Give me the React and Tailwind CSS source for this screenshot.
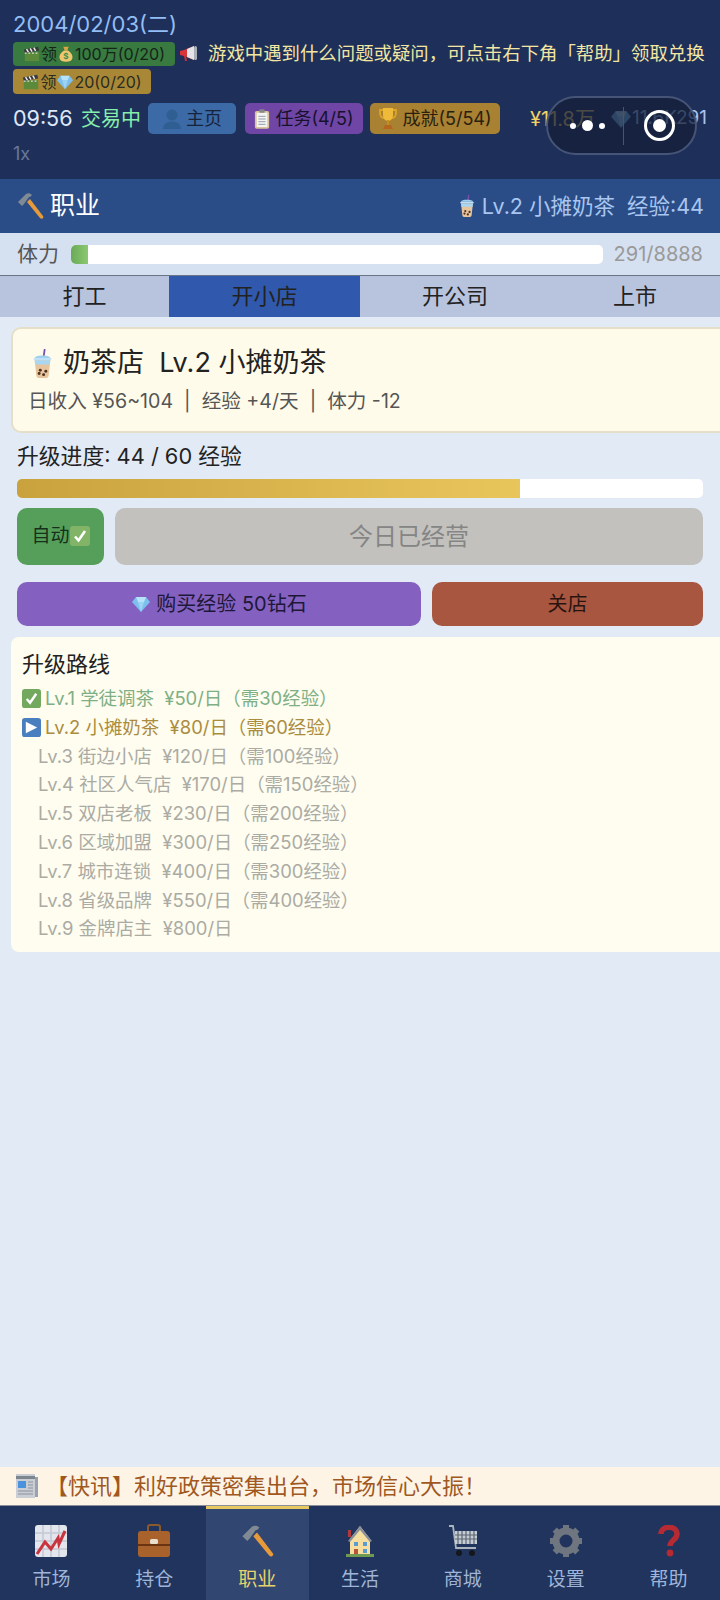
const FONT = { fontFamily: 'Inter, "Noto Sans CJK SC", "Noto Sans", sans-serif' }

function Clapper({ s = 18 }) {
  return (
    <svg width={s} height={s} viewBox="0 0 20 20" className="shrink-0">
      <rect x="2" y="8" width="16" height="10" fill="#5a8a3a" />
      <path d="M1 5l16-3 1 4-16 3z" fill="#3a3a3a" />
      <path d="M4 4.5l2 3.5M8 3.8l2 3.5M12 3l2 3.5" stroke="#eee" strokeWidth="1.6" />
      <path d="M2 9h16" stroke="#ddd" strokeWidth="1.2" strokeDasharray="2 2" />
    </svg>
  )
}
function MoneyBag({ s = 18 }) {
  return (
    <svg width={s} height={s} viewBox="0 0 20 20" className="shrink-0">
      <path d="M7 2h6l-1.5 4h-3z" fill="#d9a441" />
      <path d="M8 6h4c4 2 6 6 5 9-.6 2.400-3 3.500-7 3.500S3.600 17.400 3 15c-1-3 1-7 5-9z" fill="#f2c46d" />
      <text x="10" y="15.500" fontSize="9" textAnchor="middle" fill="#3f8f4a" fontWeight="700">$</text>
    </svg>
  )
}
function Diamond({ s = 18 }) {
  return (
    <svg width={s} height={s} viewBox="0 0 20 20" className="shrink-0">
      <path d="M5 3h10l4 5-9 10L1 8z" fill="#7cc0ee" />
      <path d="M5 3h10l-2 5H7z" fill="#b8e2f9" />
      <path d="M7 8h6l-3 10z" fill="#9dd3f4" />
    </svg>
  )
}
function Megaphone({ s = 20 }) {
  return (
    <svg width={s} height={s} viewBox="0 0 20 20" className="shrink-0">
      <path d="M1 7l4-1v6l-4-1z" fill="#d8343a" />
      <path d="M5 6l10-4v14L5 12z" fill="#d8343a" />
      <path d="M8 5l7-3v14l-7-3z" fill="#e2e4e8" />
      <path d="M5 12l2 0 1 5H6z" fill="#c92f34" />
      <rect x="15" y="2" width="3" height="14" rx="1.500" fill="#aab0b8" />
    </svg>
  )
}
function User() {
  return (
    <svg width="20" height="22" viewBox="0 0 20 22" className="shrink-0">
      <circle cx="10" cy="7" r="5.500" fill="#2f5f92" />
      <path d="M1 21c0-5 4-7.500 9-7.500s9 2.500 9 7.500z" fill="#2f5f92" />
    </svg>
  )
}
function Clipboard() {
  return (
    <svg width="16" height="22" viewBox="0 0 18 22" className="shrink-0">
      <rect x="1" y="2" width="16" height="20" rx="2" fill="#d9c49a" />
      <rect x="3" y="4" width="12" height="16" fill="#f4f4f4" />
      <rect x="6" y="0" width="6" height="4" rx="1" fill="#888" />
      <path d="M5 8h8M5 11h8M5 14h8M5 17h8" stroke="#8a93a0" strokeWidth="1" />
    </svg>
  )
}
function Trophy() {
  return (
    <svg width="20" height="24" viewBox="0 0 20 24" className="shrink-0">
      <path d="M2 3h16v3c0 3-2 5-4 5H6C4 11 2 9 2 6z" fill="none" stroke="#e0a526" strokeWidth="1.800" />
      <path d="M5 1h10v7c0 3-2 6-5 6s-5-3-5-6z" fill="#efb93a" />
      <rect x="9" y="13" width="2" height="5" fill="#c98e1c" />
      <path d="M5 22l2-4h6l2 4z" fill="#b5651d" />
    </svg>
  )
}
function Hammer({ s = 28 }) {
  return (
    <svg width={s} height={s} viewBox="0 0 28 28" className="shrink-0">
      <path d="M11 10l3-3 13 17c.7 1 .2 2-.5 2.500s-1.700.3-2.500-.5z" fill="#e79a3c" />
      <path d="M2 10l8-8c2-1 4-1 6 1l-2 2-1 0-5 7-2 2z" fill="#7f8a94" />
    </svg>
  )
}
function BubbleTea({ s = 24 }) {
  return (
    <svg width={s} height={s} viewBox="0 0 20 26" className="shrink-0">
      <path d="M12 0l-1 7" stroke="#7b4fb0" strokeWidth="1.600" />
      <path d="M3 8c0-3 14-3 14 0z" fill="#9fd0f0" />
      <rect x="2" y="8" width="16" height="2" rx="1" fill="#bfe0f6" />
      <path d="M3 10h14l-1.500 14c-.1 1-1 2-2 2h-7c-1 0-1.900-1-2-2z" fill="#e7c49b" />
      <path d="M3 10h14l-.4 4H3.400z" fill="#a9d6f2" />
      <circle cx="7" cy="22" r="1.300" fill="#4a3020" />
      <circle cx="11" cy="23" r="1.300" fill="#4a3020" />
      <circle cx="13" cy="20" r="1.300" fill="#4a3020" />
      <circle cx="8" cy="19" r="1.300" fill="#4a3020" />
    </svg>
  )
}
function CheckBox({ s = 19, bg = '#73a85f' }) {
  return (
    <svg width={s} height={s} viewBox="0 0 20 20" className="shrink-0">
      <rect width="20" height="20" rx="3" fill={bg} />
      <path d="M5 10.500l3.500 4L15 5" fill="none" stroke="#fff" strokeWidth="2.600" />
    </svg>
  )
}
function PlayBox() {
  return (
    <svg width="19" height="19" viewBox="0 0 20 20" className="shrink-0">
      <rect width="20" height="20" rx="3" fill="#4a7fbf" />
      <path d="M4 4l12 6-12 6z" fill="#fff" />
    </svg>
  )
}
function News() {
  return (
    <svg width="22" height="24" viewBox="0 0 22 24" className="shrink-0">
      <rect x="18" y="3" width="4" height="20" fill="#9aa3ad" />
      <rect width="19" height="24" fill="#c9ced4" />
      <rect x="0" y="2" width="19" height="3" fill="#7d858f" />
      <rect x="2" y="7" width="8" height="7" fill="#4b92dc" />
      <path d="M12 8h5M12 11h5M12 14h5M2 17h15M2 20h15" stroke="#8a929c" strokeWidth="1.200" />
    </svg>
  )
}
function Chart() {
  return (
    <svg width="32" height="32" viewBox="0 0 32 32">
      <rect width="32" height="32" rx="3" fill="#e3e6ec" />
      <path d="M8 0v32M16 0v32M24 0v32M0 8h32M0 16h32M0 24h32" stroke="#c3c8d2" strokeWidth="1.500" />
      <path d="M2 29l8-12 6 7 7-11 1 6 6-13" fill="none" stroke="#c9343f" strokeWidth="3" />
    </svg>
  )
}
function Briefcase() {
  return (
    <svg width="34" height="34" viewBox="0 0 34 34">
      <path d="M11 7V3c0-1 1-2 2-2h8c1 0 2 1 2 2v4" fill="none" stroke="#8a5a2b" strokeWidth="2" />
      <rect x="1" y="7" width="32" height="26" rx="3" fill="#a9622c" />
      <rect x="1" y="20" width="32" height="2" fill="#6b3410" />
      <rect x="13" y="15" width="8" height="5" rx="1.500" fill="#eadfce" />
    </svg>
  )
}
function House() {
  return (
    <svg width="30" height="32" viewBox="0 0 30 32">
      <path d="M5 14L15 1l10 13v16H5z" fill="#f6dfa0" />
      <path d="M15 1L3 16l2 1L15 5l10 12 2-1z" fill="#8a8f99" />
      <rect x="3" y="5" width="3" height="7" fill="#b03a3a" />
      <rect x="9" y="17" width="4" height="4" fill="#5a9bd0" />
      <rect x="18" y="17" width="4" height="4" fill="#5a9bd0" />
      <rect x="9" y="24" width="4" height="6" fill="#b8543a" />
      <rect x="18" y="24" width="4" height="4" fill="#5a9bd0" />
      <rect x="1" y="29" width="28" height="3" fill="#6f9a52" />
    </svg>
  )
}
function Cart() {
  return (
    <svg width="30" height="32" viewBox="0 0 30 32">
      <path d="M1 1h4l3 22h20" fill="none" stroke="#aeb4bd" strokeWidth="1.800" />
      <rect x="7" y="6" width="22" height="13" fill="#c6ccd4" />
      <path d="M10 6v13M14 6v13M18 6v13M22 6v13M26 6v13M7 10h22M7 14h22" stroke="#5d6672" strokeWidth="1.200" />
      <circle cx="11" cy="28" r="3" fill="#15171c" />
      <circle cx="24" cy="28" r="3" fill="#15171c" />
    </svg>
  )
}
function Gear() {
  return (
    <svg width="34" height="34" viewBox="0 0 34 34">
      <circle cx="17" cy="17" r="10" fill="none" stroke="#6f7680" strokeWidth="7" />
      <path d="M17 1v6M17 27v6M1 17h6M27 17h6M5.700 5.700l4.300 4.300M24 24l4.300 4.300M5.700 28.300L10 24M24 10l4.300-4.300" stroke="#6f7680" strokeWidth="6" />
    </svg>
  )
}
function Question() {
  return (
    <svg width="24" height="32" viewBox="0 0 24 32">
      <path d="M4 9c0-9 16-9 16 0 0 6-7 6-7 12" fill="none" stroke="#b62a33" strokeWidth="5.500" />
      <circle cx="13" cy="28" r="3.400" fill="#b62a33" />
    </svg>
  )
}

const routes = [
  { t: 'Lv.3 街边小店  ¥120/日（需100经验）' },
  { t: 'Lv.4 社区人气店  ¥170/日（需150经验）' },
  { t: 'Lv.5 双店老板  ¥230/日（需200经验）' },
  { t: 'Lv.6 区域加盟  ¥300/日（需250经验）' },
  { t: 'Lv.7 城市连锁  ¥400/日（需300经验）' },
  { t: 'Lv.8 省级品牌  ¥550/日（需400经验）' },
  { t: 'Lv.9 金牌店主  ¥800/日' },
]

const navItems = [
  { label: '市场', icon: <Chart /> },
  { label: '持仓', icon: <Briefcase /> },
  { label: '职业', icon: <Hammer s={34} />, active: true },
  { label: '生活', icon: <House /> },
  { label: '商城', icon: <Cart /> },
  { label: '设置', icon: <Gear /> },
  { label: '帮助', icon: <Question /> },
]

export default function App() {
  return (
    <div style={FONT} className="relative w-[720px] h-[1600px] flex flex-col overflow-hidden bg-[#e2eaf6]">
      {/* top status */}
      <div className="h-[179px] shrink-0 bg-[#1e3059] pl-[13px] pt-[9px]">
        <div className="text-[22px] leading-[30px] text-[#93bdf5]">2004/02/03(二)</div>
        <div className="mt-[3px] flex items-center gap-[4px] h-[24px] whitespace-nowrap">
          <span className="h-[24px] w-[162px] shrink-0 rounded-[4px] bg-[#387a3f] flex items-center justify-center text-[16px] text-[#15241a]">
            <Clapper />领<MoneyBag />100万(0/20)
          </span>
          <Megaphone />
          <span className="ml-[5px] shrink-0 text-[18.4px] text-[#f3e6a2]">游戏中遇到什么问题或疑问，可点击右下角「帮助」领取兑换</span>
        </div>
        <div className="mt-[3px] h-[25px] w-[138px] rounded-[4px] bg-[#a88836] flex items-center justify-center text-[16px] text-[#2b2b20] whitespace-nowrap">
          <Clapper />领<Diamond />20(0/20)
        </div>
        <div className="mt-[9px] h-[31px] w-[800px] flex items-center whitespace-nowrap">
          <span className="w-[68px] shrink-0 text-[21.5px] text-[#dfe8fa]">09:56</span>
          <span className="w-[67px] shrink-0 text-[20px] text-[#86efac]">交易中</span>
          <span className="h-[31px] w-[88px] shrink-0 rounded-[5px] bg-[#3c6aa6] flex items-center justify-center gap-[4px] text-[18px] text-[#16233a]"><User />主页</span>
          <span className="ml-[9px] h-[31px] w-[118px] shrink-0 rounded-[5px] bg-[#6f45a6] flex items-center justify-center gap-[5px] text-[18px] text-[#17122b]"><Clipboard />任务(4/5)</span>
          <span className="ml-[7px] h-[31px] w-[130px] shrink-0 rounded-[5px] bg-[#a88132] flex items-center justify-center gap-[4px] text-[18px] text-[#2a2010]"><Trophy />成就(5/54)</span>
          <span className="ml-[30px] w-[80px] shrink-0 text-[20px] text-[#f0d265]">¥11.8万</span>
          <span className="w-[66px] shrink-0 flex items-center text-[19px] text-[#a9c4ec]"><Diamond s={22} />11.6K</span>
          <span className="text-[19px] text-[#a9c4ec]">291</span>
        </div>
        <div className="mt-[8px] text-[18px] leading-[24px] text-[#66789c]">1x</div>
      </div>

      {/* capsule */}
      <div className="absolute left-[546px] top-[96px] w-[151px] h-[59px] rounded-full border-2 border-[#465477] bg-[#141d38]/75 flex items-center">
        <div className="w-[75px] flex items-center justify-center gap-[6px] pl-[4px]">
          <i className="w-[6px] h-[6px] rounded-full bg-white" />
          <i className="w-[11px] h-[11px] rounded-full bg-white" />
          <i className="w-[6px] h-[6px] rounded-full bg-white" />
        </div>
        <div className="w-[1px] h-[38px] bg-[#465477]" />
        <div className="flex-1 flex items-center justify-center">
          <div className="w-[31px] h-[31px] rounded-full border-[3px] border-white flex items-center justify-center">
            <i className="w-[13px] h-[13px] rounded-full bg-white" />
          </div>
        </div>
      </div>

      {/* career title */}
      <div className="h-[54px] shrink-0 bg-[#2b4d87] flex items-center pl-[16px] pr-[16px]">
        <Hammer />
        <span className="ml-[6px] text-[25px] text-white">职业</span>
        <div className="ml-auto flex items-center text-[21.5px] text-[#a9c6f0] whitespace-nowrap">
          <BubbleTea s={22} />
          <span className="ml-[4px]">Lv.2 小摊奶茶</span>
          <span className="ml-[12px]">经验:44</span>
        </div>
      </div>

      {/* stamina */}
      <div className="h-[42px] shrink-0 bg-[#d5e0f0] flex items-center pl-[17px] pr-[17px]">
        <span className="w-[54px] text-[21px] text-[#555]">体力</span>
        <div className="w-[532px] h-[19px] rounded-[5px] bg-white overflow-hidden">
          <div className="w-[17px] h-full bg-gradient-to-r from-[#6aab58] to-[#8cc870]" />
        </div>
        <span className="ml-auto text-[20px] text-[#999]">291/8888</span>
      </div>

      {/* tabs */}
      <div className="h-[42px] shrink-0 grid grid-cols-[169px_191px_190px_170px] border-t border-[#6a7688] bg-[#b8c4dd] text-[22px] text-[#222] text-center leading-[41px]">
        <div>打工</div>
        <div className="bg-[#3059ad]">开小店</div>
        <div>开公司</div>
        <div>上市</div>
      </div>

      {/* shop card */}
      <div className="mt-[10px] ml-[11px] w-[730px] h-[106px] shrink-0 rounded-[10px] border-2 border-[#e6dfc8] bg-[#fffbea] pl-[15px] pt-[15px]">
        <div className="flex items-center h-[38px] text-[27px] text-[#222] whitespace-pre">
          <BubbleTea s={29} />
          <span className="ml-[6px]">奶茶店  Lv.2 小摊奶茶</span>
        </div>
        <div className="mt-[5px] text-[19.6px] text-[#555] whitespace-pre">日收入 ¥56~104  |  经验 +4/天  |  体力 -12</div>
      </div>

      {/* progress */}
      <div className="mt-[7px] mx-[17px] text-[21.8px] leading-[32px] text-[#222] whitespace-pre">升级进度: 44 / 60 经验</div>
      <div className="mt-[7px] mx-[17px] h-[19px] rounded-[5px] bg-white overflow-hidden shrink-0">
        <div className="w-[503px] h-full bg-gradient-to-r from-[#c9a23e] to-[#e9c65c]" />
      </div>
      <div className="mt-[10px] mx-[17px] h-[57px] flex gap-[11px] shrink-0">
        <div className="w-[87px] rounded-[10px] bg-[#559f5a] flex items-center justify-center text-[19px] text-[#16301c]">
          自动<span className="-mt-[2px]"><CheckBox s={20} bg="#81b467" /></span>
        </div>
        <div className="flex-1 rounded-[10px] bg-[#c2c1bd] flex items-center justify-center text-[24px] text-[#858585]">今日已经营</div>
      </div>
      <div className="mt-[17px] mx-[17px] h-[44px] flex gap-[11px] shrink-0">
        <div className="w-[404px] rounded-[10px] bg-[#8461c0] flex items-center justify-center gap-[5px] text-[20px] text-[#1e1838]">
          <Diamond s={20} />购买经验 50钻石
        </div>
        <div className="flex-1 rounded-[10px] bg-[#a85640] flex items-center justify-center text-[20px] text-[#2a1410]">关店</div>
      </div>

      {/* route list */}
      <div className="mt-[11px] ml-[11px] w-[730px] h-[315px] shrink-0 rounded-[8px] bg-[#fefdf0] pl-[11px] pt-[11px] text-[18.45px] leading-[28.8px] whitespace-pre">
        <div className="h-[33px] leading-[33px] text-[22px] text-[#222]">升级路线</div>
        <div className="mt-[3px] flex items-center gap-[4px] text-[#7faf84]"><CheckBox />Lv.1 学徒调茶  ¥50/日（需30经验）</div>
        <div className="flex items-center gap-[4px] text-[#ab8c3e]"><PlayBox />Lv.2 小摊奶茶  ¥80/日（需60经验）</div>
        {routes.map((r) => (
          <div key={r.t} className="pl-[16px] text-[#ababa4]">{r.t}</div>
        ))}
      </div>

      <div className="flex-1" />

      {/* ticker */}
      <div className="h-[39px] shrink-0 bg-[#fdf4e6] border-b border-[#8a8f99] flex items-center pl-[16px] text-[22px] text-[#a0581f] whitespace-nowrap">
        <News />
        <span className="ml-[8px]">【快讯】利好政策密集出台，市场信心大振！</span>
      </div>

      {/* bottom nav */}
      <div className="h-[94px] shrink-0 bg-[#20345d] grid grid-cols-7">
        {navItems.map((n) => (
          <div key={n.label} className={`flex flex-col items-center ${n.active ? 'bg-[#324672] border-t-[3px] border-[#e8c860]' : 'border-t-[3px] border-transparent'}`}>
            <div className="h-[40px] mt-[12px] flex items-center justify-center">{n.icon}</div>
            <span className={`mt-[5px] text-[19px] leading-[28px] ${n.active ? 'text-[#e8d46a]' : 'text-[#9fb4d8]'}`}>{n.label}</span>
          </div>
        ))}
      </div>
    </div>
  )
}
